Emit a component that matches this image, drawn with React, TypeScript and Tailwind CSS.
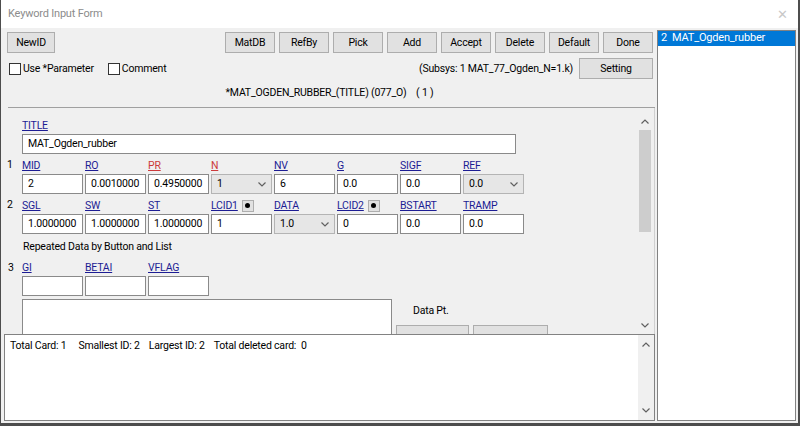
import React from "react";

const Chevron = ({ up = false }: { up?: boolean }) => (
  <svg width="8" height="5" viewBox="0 0 8 5" className="block">
    {up ? (
      <polyline points="0.5,4.5 4,1 7.5,4.5" fill="none" stroke="#606060" strokeWidth="1.2" />
    ) : (
      <polyline points="0.5,0.5 4,4 7.5,0.5" fill="none" stroke="#606060" strokeWidth="1.2" />
    )}
  </svg>
);

function Btn({ children, className = "" }: { children?: React.ReactNode; className?: string }) {
  return (
    <div
      className={`h-[21px] border border-[#adadad] bg-[#e1e1e1] flex items-center justify-center text-black shrink-0 ${className}`}
    >
      {children}
    </div>
  );
}

function Field({ value = "", className = "w-[61px]" }: { value?: string; className?: string }) {
  return (
    <div className={`h-[20px] border border-[#8a8a8a] bg-white pl-[5px] flex items-center text-black ${className}`}>
      {value}
    </div>
  );
}

function Sel({ value }: { value: string }) {
  return (
    <div className="h-[20px] w-[61px] border border-[#b4b4b4] bg-[#e6e6e6] pl-[5px] pr-[5px] flex items-center justify-between text-black">
      <span>{value}</span>
      <Chevron />
    </div>
  );
}

function Lbl({ text, red = false, dot = false }: { text: string; red?: boolean; dot?: boolean }) {
  return (
    <div className="w-[63px] h-[15px] flex items-center gap-[4px]">
      <span className={`underline leading-[15px] ${red ? "text-[#cc3b3b]" : "text-[#1d1d94]"}`}>{text}</span>
      {dot && (
        <span className="w-[12px] h-[12px] border border-[#adadad] bg-[#e1e1e1] flex items-center justify-center">
          <span className="w-[5px] h-[5px] rounded-full bg-black" />
        </span>
      )}
    </div>
  );
}

function Cell({ children }: { children: React.ReactNode }) {
  return <div className="w-[63px] shrink-0">{children}</div>;
}

export default function App() {
  return (
    <div className="w-[800px] h-[426px] flex flex-col border-l border-r-2 border-b-[3px] border-[#4d4d4d] bg-[#f0f0f0] font-['Roboto',sans-serif] text-[10.5px] tracking-[-0.2px] text-black overflow-hidden">
      {/* Title bar */}
      <div className="h-[28px] bg-white flex items-center justify-between pl-[7px] pr-[10px] shrink-0">
        <span className="text-[#8c8c8c] text-[11px]">Keyword Input Form</span>
        <span className="text-[#c8c8c8] text-[13px] leading-none">✕</span>
      </div>

      {/* Body */}
      <div className="flex-1 flex">
        {/* Left column */}
        <div className="ml-[3px] w-[651px] flex flex-col">
          {/* Toolbar */}
          <div className="h-[79px] flex flex-col shrink-0">
            <div className="mt-[4px] flex justify-between">
              <Btn className="ml-[3px] w-[48px]">NewID</Btn>
              <div className="flex gap-[4px] mr-[2px]">
                <Btn className="w-[50px]">MatDB</Btn>
                <Btn className="w-[50px]">RefBy</Btn>
                <Btn className="w-[50px]">Pick</Btn>
                <Btn className="w-[50px]">Add</Btn>
                <Btn className="w-[50px]">Accept</Btn>
                <Btn className="w-[50px]">Delete</Btn>
                <Btn className="w-[50px]">Default</Btn>
                <Btn className="w-[50px]">Done</Btn>
              </div>
            </div>
            <div className="mt-[5px] h-[21px] flex items-center">
              <span className="ml-[5px] w-[12px] h-[12px] border border-[#333] bg-white" />
              <span className="ml-[2px]">Use *Parameter</span>
              <span className="ml-[14px] w-[12px] h-[12px] border border-[#333] bg-white" />
              <span className="ml-[2px]">Comment</span>
              <span className="ml-auto mr-[6px]">(Subsys: 1 MAT_77_Ogden_N=1.k)</span>
              <Btn className="w-[74px] mr-[2px]">Setting</Btn>
            </div>
            <div className="flex-1 flex items-center justify-center pb-[1px]">
              <span className="whitespace-pre">*MAT_OGDEN_RUBBER_(TITLE) (077_O)    ( 1 )</span>
            </div>
          </div>

          {/* Scroll pane */}
          <div className="h-[227px] flex flex-col shrink-0">
            <div className="ml-[4px] h-px bg-[#a0a0a0]" />
            <div className="flex-1 flex overflow-hidden">
              <div className="flex-1 flex flex-col overflow-hidden">
                {/* TITLE */}
                <div className="mt-[10px] pl-[18px]">
                  <Lbl text="TITLE" />
                  <Field value="MAT_Ogden_rubber" className="mt-[1px] w-[494px]" />
                </div>
                {/* Row 1 */}
                <div className="mt-[4px] flex">
                  <div className="w-[18px] pl-[3px] h-[15px] leading-[14px]">1</div>
                  <div className="flex flex-col">
                    <div className="flex">
                      <Lbl text="MID" />
                      <Lbl text="RO" />
                      <Lbl text="PR" red />
                      <Lbl text="N" red />
                      <Lbl text="NV" />
                      <Lbl text="G" />
                      <Lbl text="SIGF" />
                      <Lbl text="REF" />
                    </div>
                    <div className="flex mt-[1px]">
                      <Cell><Field value="2" /></Cell>
                      <Cell><Field value="0.0010000" /></Cell>
                      <Cell><Field value="0.4950000" /></Cell>
                      <Cell><Sel value="1" /></Cell>
                      <Cell><Field value="6" /></Cell>
                      <Cell><Field value="0.0" /></Cell>
                      <Cell><Field value="0.0" /></Cell>
                      <Cell><Sel value="0.0" /></Cell>
                    </div>
                  </div>
                </div>
                {/* Row 2 */}
                <div className="mt-[4px] flex">
                  <div className="w-[18px] pl-[3px] h-[15px] leading-[14px]">2</div>
                  <div className="flex flex-col">
                    <div className="flex">
                      <Lbl text="SGL" />
                      <Lbl text="SW" />
                      <Lbl text="ST" />
                      <Lbl text="LCID1" dot />
                      <Lbl text="DATA" />
                      <Lbl text="LCID2" dot />
                      <Lbl text="BSTART" />
                      <Lbl text="TRAMP" />
                    </div>
                    <div className="flex mt-[1px]">
                      <Cell><Field value="1.0000000" /></Cell>
                      <Cell><Field value="1.0000000" /></Cell>
                      <Cell><Field value="1.0000000" /></Cell>
                      <Cell><Field value="1" /></Cell>
                      <Cell><Sel value="1.0" /></Cell>
                      <Cell><Field value="0" /></Cell>
                      <Cell><Field value="0.0" /></Cell>
                      <Cell><Field value="0.0" /></Cell>
                    </div>
                  </div>
                </div>
                {/* Repeated */}
                <div className="mt-[5px] pl-[19px] h-[15px] leading-[15px]">Repeated Data by Button and List</div>
                <div className="mt-[2px] ml-[4px] mr-[2px] h-px bg-[#a0a0a0]" />
                {/* Row 3 */}
                <div className="mt-[4px] flex">
                  <div className="w-[18px] pl-[4px] h-[15px] leading-[15px]">3</div>
                  <div className="flex flex-col">
                    <div className="flex">
                      <Lbl text="GI" />
                      <Lbl text="BETAI" />
                      <Lbl text="VFLAG" />
                    </div>
                    <div className="flex mt-[1px]">
                      <Cell><Field /></Cell>
                      <Cell><Field /></Cell>
                      <Cell><Field /></Cell>
                    </div>
                  </div>
                </div>
                <div className="mt-[3px] pl-[18px] flex">
                  <div className="w-[370px] h-[40px] border border-[#8a8a8a] bg-white shrink-0" />
                  <div className="ml-[4px] flex flex-col">
                    <div className="ml-[17px] mt-[5px] h-[14px] leading-[14px]">Data Pt.</div>
                    <div className="mt-[7px] flex gap-[4px]">
                      <Btn className="w-[73px]" />
                      <Btn className="w-[75px]" />
                    </div>
                  </div>
                </div>
              </div>
              {/* Scrollbar */}
              <div className="w-[17px] flex flex-col items-center bg-[#f0f0f0] mr-[1px]">
                <div className="h-[22px] flex items-end justify-center pb-[6px]">
                  <Chevron up />
                </div>
                <div className="w-[12px] h-[102px] bg-[#cdcdcd]" />
                <div className="flex-1" />
                <div className="h-[17px] flex items-center justify-center">
                  <Chevron />
                </div>
              </div>
              <div className="w-px bg-[#d0d0d0]" />
            </div>
          </div>

          {/* Output pane */}
          <div className="h-[87px] border border-[#828282] bg-white flex shrink-0">
            <div className="flex-1 pl-[5px] pt-[3px] flex h-[18px] items-center">
              <span>Total Card: 1</span>
              <span className="ml-[12px]">Smallest ID: 2</span>
              <span className="ml-[9px]">Largest ID: 2</span>
              <span className="ml-[9px] whitespace-pre">Total deleted card:  0</span>
            </div>
            <div className="w-[16px] bg-[#f0f0f0] flex flex-col items-center justify-between py-[7px]">
              <Chevron up />
              <Chevron />
            </div>
          </div>
        </div>

        {/* Right list */}
        <div className="ml-[2px] w-[139px] mt-[2px] mb-[2px] border border-[#828282] bg-white">
          <div className="h-[15px] bg-[#0078d7] text-white pl-[3px] flex items-center whitespace-pre text-[11px]">
            2  MAT_Ogden_rubber
          </div>
        </div>
      </div>
    </div>
  );
}
